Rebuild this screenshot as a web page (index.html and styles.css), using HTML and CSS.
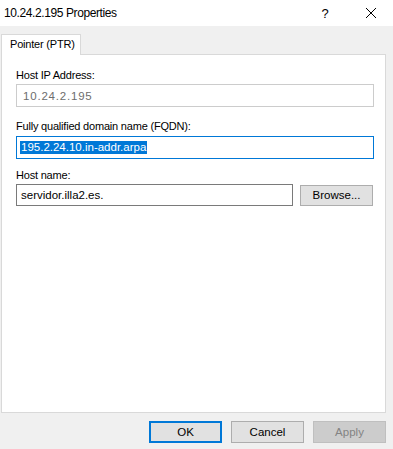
FILE: index.html
```html
<!DOCTYPE html>
<html lang="en">
    <head>
        <meta charset="UTF-8" />
        <title>10.24.2.195 Properties</title>
        <link rel="stylesheet" href="styles.css">
    </head>
    <body>

        <div class="window">
            <div class="titlebar">
                <span class="title">10.24.2.195 Properties</span>
                <span class="help">?</span>
                <span class="close">
                    <svg width="12" height="12" viewBox="0 0 12 12">
                        <path d="M1 1 L11 11 M11 1 L1 11" stroke="#000" stroke-width="1" fill="none" />
                    </svg>
                </span>
            </div>

            <div class="content">
                <div class="tabs">
                    <div class="tab active">Pointer (PTR)</div>
                </div>

                <div class="panel">
                    <div class="field ip-field">
                        <label>Host IP Address:</label>
                        <div class="edit disabled"><span class="ip">10.24.2.195</span></div>
                    </div>

                    <div class="field fqdn-field">
                        <label>Fully qualified domain name (FQDN):</label>
                        <div class="edit focused"><span class="selected">195.2.24.10.in-addr.arpa</span></div>
                    </div>

                    <div class="field host-field">
                        <label>Host name:</label>
                        <div class="row">
                            <div class="edit host">servidor.illa2.es.</div>
                            <button class="btn browse">Browse...</button>
                        </div>
                    </div>
                </div>

                <div class="buttons">
                    <button class="btn default">OK</button>
                    <button class="btn">Cancel</button>
                    <button class="btn" disabled>Apply</button>
                </div>
            </div>
        </div>

    </body>
</html>
```

FILE: styles.css
```css
body {
    margin: 0;
    font-family: 'Liberation Sans', Arial, sans-serif;
    font-size: 11.5px;
    color: #000000;
    background-color: #F0F0F0;
}

.window {
    width: 393px;
    height: 449px;
    display: flex;
    flex-direction: column;
}

.titlebar {
    height: 26px;
    background-color: #FFFFFF;
    display: flex;
    align-items: center;
    padding-left: 4px;
    box-sizing: border-box;
}

.title {
    flex: 1;
    font-size: 12px;
    letter-spacing: -0.4px;
}

.help {
    width: 46px;
    text-align: center;
    font-size: 13px;
}

.close {
    width: 46px;
    display: flex;
    justify-content: center;
    margin-right: -1px;
}

.content {
    flex: 1;
    padding: 8px 7px 0 1px;
    display: flex;
    flex-direction: column;
}

.tabs {
    display: flex;
    height: 20px;
}

.tab {
    width: 80px;
    height: 21px;
    box-sizing: border-box;
    border: 1px solid #D9D9D9;
    border-bottom: none;
    background-color: #FFFFFF;
    padding-left: 8px;
    font-size: 11px;
    letter-spacing: -0.2px;
    line-height: 19px;
    white-space: nowrap;
    position: relative;
    z-index: 1;
}

.panel {
    height: 359px;
    box-sizing: border-box;
    border: 1px solid #D9D9D9;
    background-color: #FFFFFF;
    padding: 13px 11px 0 14px;
    display: flex;
    flex-direction: column;
}

.field label {
    display: block;
    font-size: 11px;
    letter-spacing: -0.2px;
    line-height: 15px;
    white-space: nowrap;
}

.ip-field label {
    margin-bottom: 1px;
}

.fqdn-field {
    margin-top: 12px;
}

.fqdn-field label {
    margin-bottom: 2px;
}

.host-field {
    margin-top: 9px;
}

.host-field label {
    margin-bottom: 1px;
}

.edit {
    height: 23px;
    box-sizing: border-box;
    border: 1px solid #7A7A7A;
    background-color: #FFFFFF;
    display: flex;
    align-items: center;
    padding-left: 4px;
    white-space: nowrap;
}

.edit.disabled {
    border-color: #CCCCCC;
    color: #6D6D6D;
    padding-left: 6px;
}

.ip {
    letter-spacing: 0.8px;
}

.edit.focused {
    border-color: #0078D7;
    padding-left: 3px;
}

.selected {
    background-color: #0078D7;
    color: #FFFFFF;
    line-height: 13px;
    padding: 0 1px;
}

.row {
    display: flex;
    align-items: center;
    gap: 7px;
}

.edit.host {
    width: 277px;
    height: 22px;
}

.btn {
    font-family: inherit;
    font-size: 11.5px;
    width: 73px;
    height: 22px;
    padding: 0;
    box-sizing: border-box;
    border: 1px solid #ADADAD;
    background-color: #E1E1E1;
    color: #000000;
}

.btn.browse {
    height: 21px;
}

.btn.default {
    border: 2px solid #0078D7;
}

.btn:disabled {
    background-color: #CCCCCC;
    border-color: #BFBFBF;
    color: #838383;
}

.buttons {
    display: flex;
    justify-content: flex-end;
    gap: 9px;
    margin-top: 8px;
}
```
